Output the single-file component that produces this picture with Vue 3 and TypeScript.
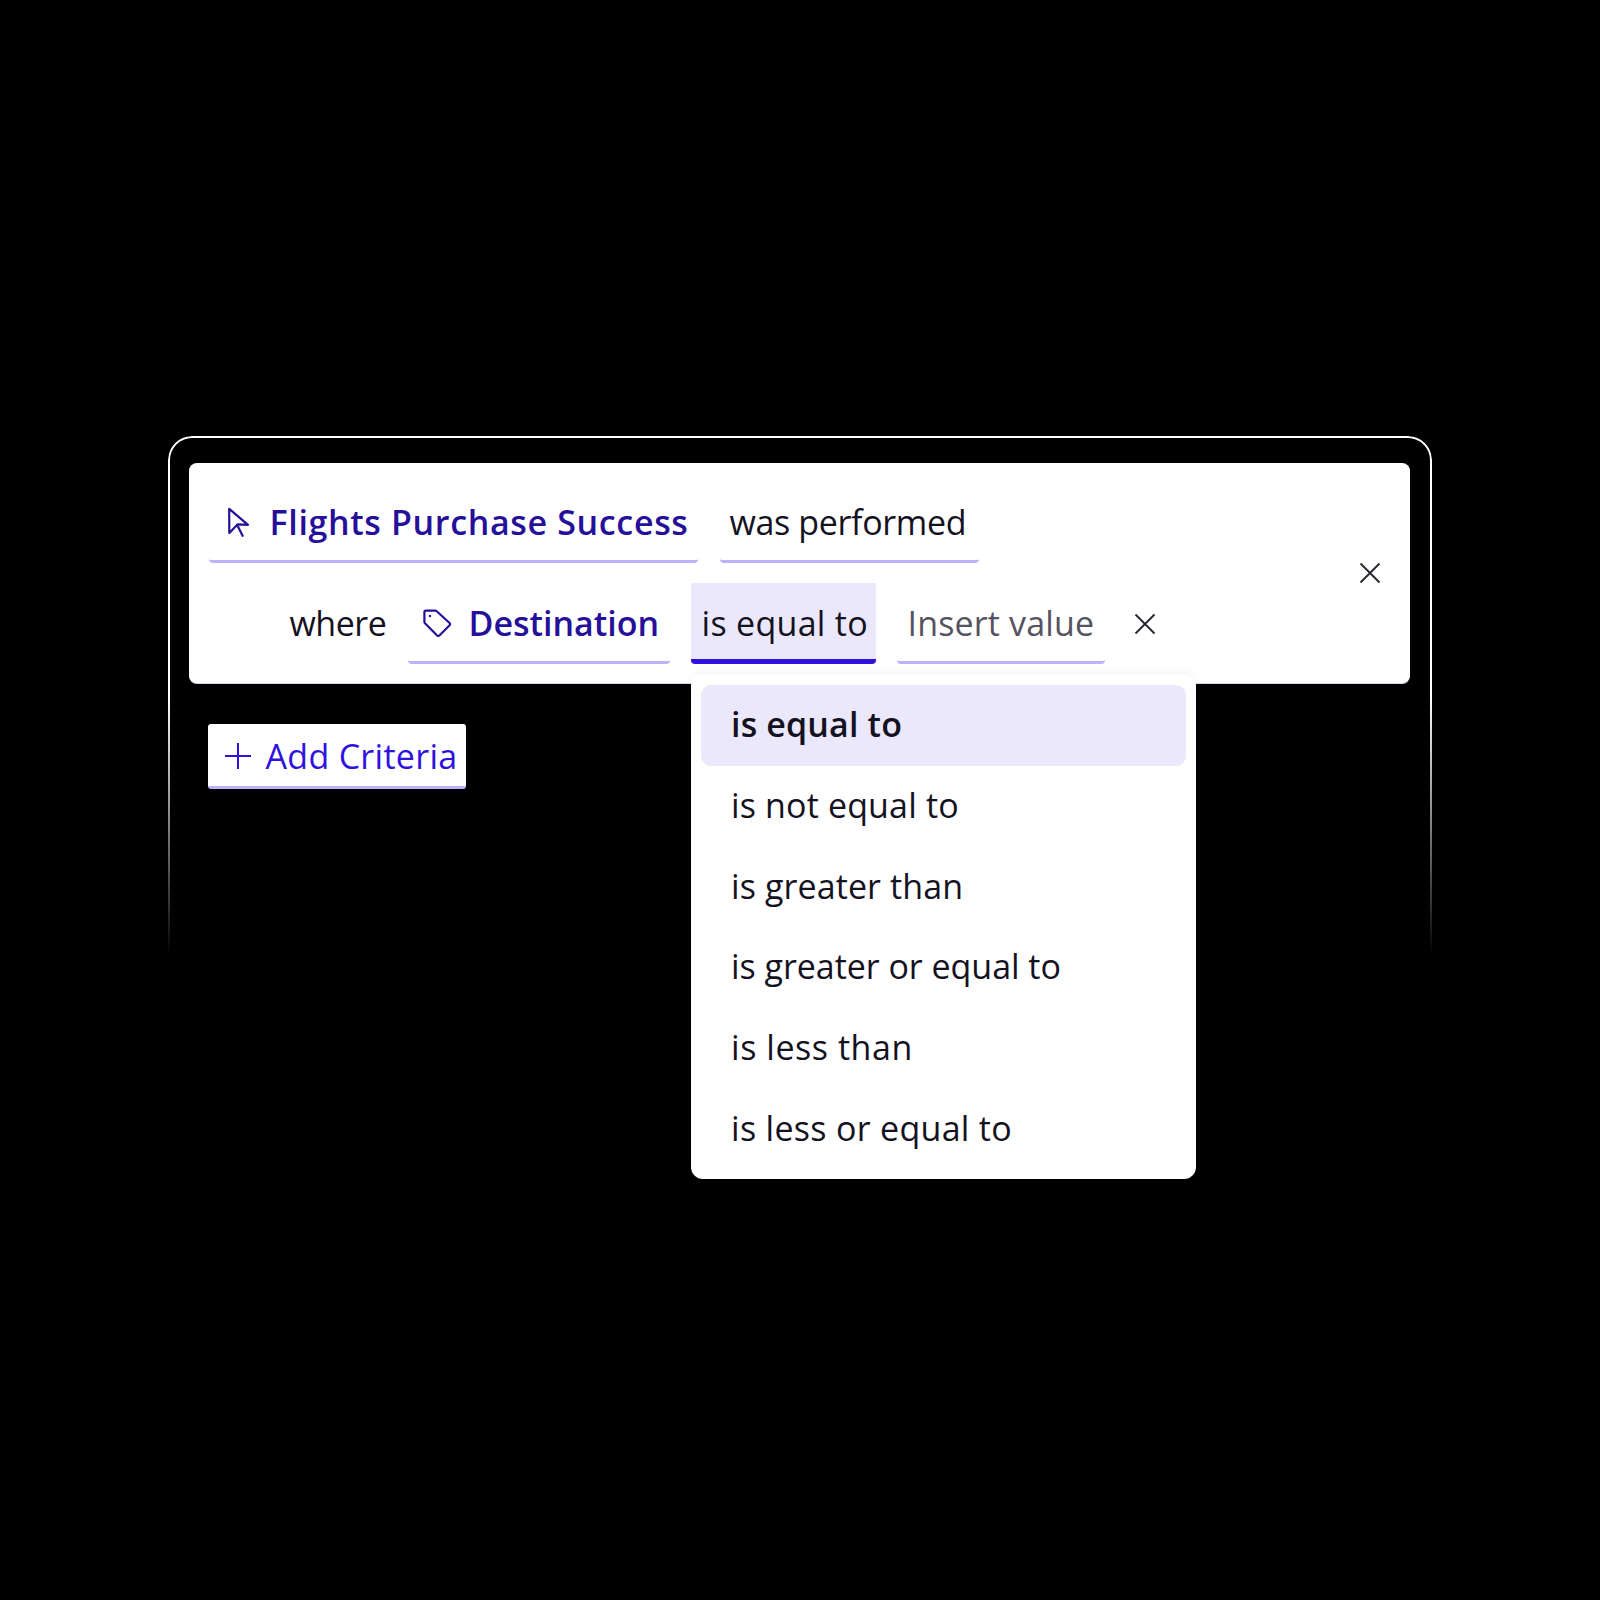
<script setup lang="ts">
interface Option {
  label: string
  spacing: number
}

const options: Option[] = [
  { label: 'is equal to', spacing: 0.15 },
  { label: 'is not equal to', spacing: 0.15 },
  { label: 'is greater than', spacing: 0.1 },
  { label: 'is greater or equal to', spacing: -0.04 },
  { label: 'is less than', spacing: 0.55 },
  { label: 'is less or equal to', spacing: 0.3 },
]
</script>

<template>
  <main class="page">
    <section class="stage">
      <div class="frame" aria-hidden="true"></div>
      <div class="card">
        <div class="rows">
          <div class="row row-first">
            <div class="chip chip-event">
              <svg class="icon-cursor" width="22" height="30" viewBox="0 0 22 30" fill="none" stroke="currentColor" stroke-width="2.2" stroke-linejoin="round" stroke-linecap="round">
                <path d="M1.2 1.8 L20 17.8 L9.5 17.4 L1.3 26 Z" />
                <path d="M9.2 18 L14.6 28.8" />
              </svg>
              <span class="strong strong-event">Flights Purchase Success</span>
            </div>
            <div class="chip chip-performed">was performed</div>
          </div>
          <div class="row row-second">
            <span class="where">where</span>
            <div class="chip chip-prop">
              <svg class="icon-tag" width="30" height="30" viewBox="0 0 30 30" fill="none" stroke="currentColor" stroke-width="2.2" stroke-linejoin="round">
                <path d="M3.5 2.6 H13.2 a2 2 0 0 1 1.5 .6 L27.6 15 a1.6 1.6 0 0 1 0 2.3 L17.4 27.6 a1.6 1.6 0 0 1 -2.3 0 L3 15.3 a2 2 0 0 1 -.6 -1.5 V3.7 a1.1 1.1 0 0 1 1.1 -1.1 Z" />
                <circle cx="8" cy="8" r="1.2" fill="currentColor" stroke="none" />
              </svg>
              <span class="strong">Destination</span>
            </div>
            <div class="chip chip-active">is equal to</div>
            <div class="chip chip-value">Insert value</div>
            <svg class="icon-x icon-x-row" width="22" height="22" viewBox="0 0 22 22" fill="none" stroke="currentColor" stroke-width="2">
              <path d="M1.5 1.5 L20.5 20.5 M20.5 1.5 L1.5 20.5" />
            </svg>
          </div>
        </div>
        <svg class="icon-x icon-x-card" width="22" height="22" viewBox="0 0 22 22" fill="none" stroke="currentColor" stroke-width="2">
          <path d="M1.5 1.5 L20.5 20.5 M20.5 1.5 L1.5 20.5" />
        </svg>
      </div>

      <button class="add" type="button">
        <svg width="28" height="28" viewBox="0 0 28 28" fill="none" stroke="currentColor" stroke-width="2">
          <path d="M14 1 V27 M1 14 H27" />
        </svg>
        <span>Add Criteria</span>
      </button>

      <ul class="menu">
        <li
          v-for="(option, index) in options"
          :key="option.label"
          class="option"
          :class="{ selected: index === 0 }"
          :style="{ letterSpacing: option.spacing + 'px' }"
        >{{ option.label }}</li>
      </ul>
    </section>
  </main>
</template>

<style scoped>
.page {
  width: 1600px;
  height: 1600px;
  box-sizing: border-box;
  padding: 436px 0 0 168px;
  background: #000;
  font-family: "Open Sans", "Liberation Sans", sans-serif;
  font-size: 34px;
  color: #14121f;
}
.stage {
  position: relative;
  width: 1264px;
  box-sizing: border-box;
  padding: 27px 22px 0 20.5px;
}
.frame {
  position: absolute;
  left: 0;
  top: 0;
  right: 0;
  height: 520px;
  box-sizing: border-box;
  border: 2px solid #fff;
  border-bottom: 0;
  border-radius: 24px 24px 0 0;
  -webkit-mask-image: linear-gradient(to bottom, #000 50%, transparent 100%);
  mask-image: linear-gradient(to bottom, #000 50%, transparent 100%);
}
.card {
  position: relative;
  display: flex;
  align-items: center;
  justify-content: space-between;
  height: 220px;
  box-sizing: border-box;
  padding: 0 29px 0 20px;
  background: #fff;
  border-radius: 8px;
  box-shadow: 0 1px 0 #d9d6e6;
}
.rows {
  display: flex;
  flex-direction: column;
  gap: 20px;
}
.row {
  display: flex;
  align-items: stretch;
  gap: 21px;
  height: 81px;
}
.row-first {
  gap: 22px;
}
.row-second {
  padding-left: 81px;
}
.chip {
  display: flex;
  align-items: center;
  box-sizing: border-box;
  padding: 1px 11px 0;
  border-bottom: 3px solid #bbb3ff;
  border-radius: 0 0 4px 4px;
  white-space: nowrap;
}
.strong {
  font-weight: 600;
  color: #26109a;
}
.strong-event {
  letter-spacing: 0.65px;
}
.chip-event {
  width: 489px;
  padding-left: 19px;
  gap: 20px;
}
.chip-performed {
  width: 259px;
  padding-left: 10px;
  letter-spacing: -0.35px;
}
.where {
  display: flex;
  align-items: center;
  width: 97px;
  padding-bottom: 2px;
  letter-spacing: -0.5px;
}
.chip-prop {
  width: 262px;
  padding-left: 14px;
  gap: 17px;
}
.chip-active {
  width: 185px;
  padding: 3px 0 0 11px;
  background: #ebe8fb;
  border-bottom: 5px solid #2f12e0;
  letter-spacing: 0.3px;
}
.chip-value {
  width: 208px;
  padding-left: 11px;
  color: #55535f;
  letter-spacing: 0.15px;
}
.icon-cursor,
.icon-tag {
  flex: none;
  color: #26109a;
}
.icon-x {
  flex: none;
  color: #2b2a33;
}
.icon-x-row {
  align-self: center;
  margin-left: 8px;
}
.add {
  display: flex;
  align-items: center;
  gap: 14px;
  height: 65px;
  width: 258px;
  box-sizing: border-box;
  margin: 41px 0 0 19.5px;
  padding: 2px 0 0 15.5px;
  background: #fff;
  border: 0;
  border-bottom: 3px solid #bbb3ff;
  border-radius: 3px;
  color: #2f12e0;
  font: inherit;
  letter-spacing: 0.3px;
}
.menu {
  position: absolute;
  left: 523px;
  top: 238px;
  width: 505px;
  height: 505px;
  box-sizing: border-box;
  margin: 0;
  padding: 11px 10px 0;
  list-style: none;
  background: #fff;
  border-radius: 12px;
  box-shadow: 0 -2px 10px rgba(60, 40, 160, 0.06);
}
.option {
  display: flex;
  align-items: center;
  height: 80.7px;
  box-sizing: border-box;
  padding: 0 0 2px 30px;
  border-radius: 10px;
}
.selected {
  background: #ebe8fb;
  font-weight: 600;
}
</style>

<style>
body {
  background: #000;
}
</style>
